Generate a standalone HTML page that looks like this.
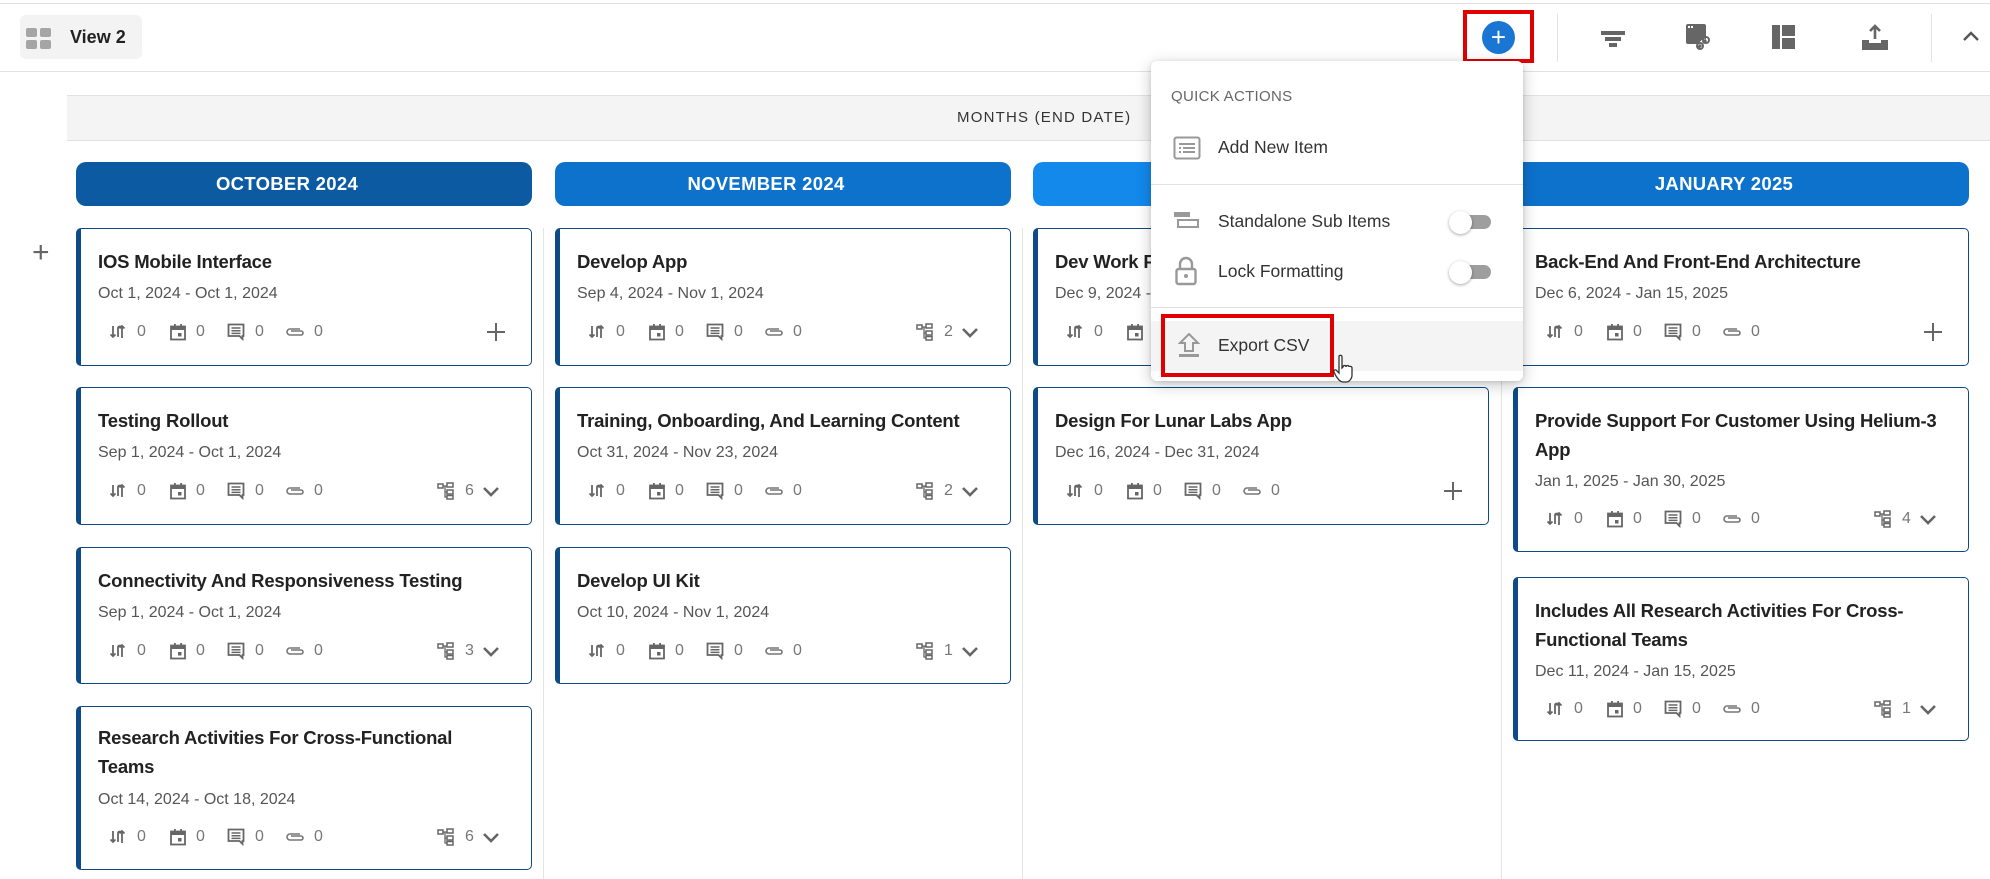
<!DOCTYPE html>
<html><head><meta charset="utf-8"><style>
*{margin:0;padding:0;box-sizing:border-box}
body{width:1990px;height:879px;overflow:hidden;background:#fff;font-family:"Liberation Sans",Arial,sans-serif;position:relative}
.abs{position:absolute}
.hdr{position:absolute;top:162px;height:44px;border-radius:10px;color:#fff;font-weight:bold;font-size:18.5px;text-align:center;line-height:44px;letter-spacing:.3px;padding-right:34px}
.card{position:absolute;background:#fff;border:1.5px solid #0d4a86;border-left:5px solid #0d4a86;border-radius:5px}
.t{position:absolute;left:17px;right:35px;font-weight:bold;font-size:18.5px;color:#222;line-height:29px;letter-spacing:-.2px}
.d{position:absolute;left:17px;font-size:16px;color:#555}
.m{position:absolute;left:0;right:0;height:20px}
.m svg{position:absolute;top:1px}
.m span{position:absolute;font-size:16px;color:#777;top:1px}
.sep{position:absolute;top:228px;bottom:0;width:1px;background:#e4e4e4}
.mi{position:absolute;left:1218px;font-size:17.5px;color:#333}
</style></head><body>
<div class="abs" style="left:0;top:3px;width:1990px;height:1px;background:#e2e2e2"></div>
<div class="abs" style="left:0;top:71px;width:1990px;height:1px;background:#e2e2e2"></div>
<div class="abs" style="left:20px;top:15px;width:122px;height:44px;background:#f3f3f3;border-radius:6px"></div>
<svg class="abs" style="left:26px;top:28px" width="26" height="22" viewBox="0 0 26 22"><rect x="0" y="0" width="11" height="9" rx="2" fill="#a5a5a5"/><rect x="14" y="0" width="11" height="9" rx="2" fill="#a5a5a5"/><rect x="0" y="12" width="11" height="9" rx="2" fill="#a5a5a5"/><rect x="14" y="12" width="11" height="9" rx="2" fill="#a5a5a5"/></svg>
<div class="abs" style="left:70px;top:27px;font-size:18px;font-weight:bold;color:#222">View 2</div>

<div class="abs" style="left:1463px;top:10px;width:71px;height:53px;border:4px solid #e00000"></div>
<div class="abs" style="left:1482px;top:21px;width:33px;height:33px;border-radius:50%;background:#1976d2;color:#fff;font-size:26px;line-height:32px;text-align:center">+</div>
<div class="abs" style="left:1557px;top:14px;width:1px;height:48px;background:#e2e2e2"></div>
<svg class="abs" style="left:1601px;top:29px" width="26" height="20" viewBox="0 0 26 20"><rect x="0" y="2" width="24" height="4" fill="#666"/><rect x="4" y="8" width="16" height="4" fill="#666"/><rect x="8" y="14" width="8" height="4" fill="#666"/></svg>
<svg class="abs" style="left:1686px;top:24px" width="26" height="28" viewBox="0 0 26 28"><rect x="0" y="0" width="20" height="20" rx="2" fill="#666"/><rect x="2" y="2" width="2" height="2" fill="#fff"/><rect x="5" y="2" width="2" height="2" fill="#fff"/><path d="M12 24l8-8" stroke="#fff" stroke-width="6"/><path d="M12 24l3-3M17 19l3-3" stroke="#666" stroke-width="3" fill="none"/><circle cx="14" cy="22" r="3" fill="none" stroke="#666" stroke-width="2"/><circle cx="20" cy="16" r="3" fill="none" stroke="#666" stroke-width="2"/></svg>
<svg class="abs" style="left:1772px;top:25px" width="24" height="24" viewBox="0 0 24 24"><rect x="0" y="0" width="8" height="24" fill="#666"/><rect x="10" y="0" width="13" height="11" fill="#666"/><rect x="10" y="13" width="13" height="11" fill="#666"/></svg>
<svg class="abs" style="left:1862px;top:24px" width="26" height="26" viewBox="0 0 26 26"><path d="M13 2v13M8 7l5-5 5 5" stroke="#666" stroke-width="2.6" fill="none"/><path d="M0 16h7v3h12v-3h7v10H0z" fill="#666"/></svg>
<div class="abs" style="left:1931px;top:14px;width:1px;height:48px;background:#e2e2e2"></div>
<svg class="abs" style="left:1963px;top:31px" width="16" height="10" viewBox="0 0 16 10"><path d="M1 9l7-7 7 7" stroke="#555" stroke-width="2.4" fill="none"/></svg>

<div class="abs" style="left:67px;top:95px;width:1923px;height:46px;background:#f4f4f4;border-top:1px solid #e2e2e2;border-bottom:1px solid #e2e2e2"></div>
<div class="abs" style="left:957px;top:109px;font-size:15px;color:#333;letter-spacing:1.2px">MONTHS (END DATE)</div>

<div class="hdr" style="left:76px;width:456px;background:#0b5aa2">OCTOBER 2024</div>
<div class="hdr" style="left:555px;width:456px;background:#0d72cc">NOVEMBER 2024</div>
<div class="hdr" style="left:1033px;width:456px;background:#1389ec">DECEMBER 2024</div>
<div class="hdr" style="left:1513px;width:456px;background:#0d72cc">JANUARY 2025</div>

<div class="sep" style="left:543px"></div>
<div class="sep" style="left:1022px"></div>
<div class="sep" style="left:1501px"></div>
<div class="abs" style="left:32px;top:236px;font-size:30px;color:#666;font-weight:300">+</div>

<svg width="0" height="0" style="position:absolute"><defs>
<symbol id="s" viewBox="0 0 18 18"><path d="M4 3v11M1.5 11.5 4 14l2.5-2.5M9 14V5c0-2 4-2 4 0v0M13 15V3M10.5 5.5 13 3l2.5 2.5" stroke="#666" stroke-width="1.8" fill="none"/></symbol>
<symbol id="c" viewBox="0 0 18 18"><rect x="2" y="3.5" width="14" height="13" fill="none" stroke="#666" stroke-width="1.8"/><rect x="2" y="3.5" width="14" height="3.5" fill="#666"/><rect x="5" y="1" width="1.8" height="3" fill="#666"/><rect x="11.2" y="1" width="1.8" height="3" fill="#666"/><rect x="9" y="10" width="3.5" height="3.5" fill="#666"/></symbol>
<symbol id="m" viewBox="0 0 18 18"><path d="M1.5 1.5h15v11.5h-1v3l-3-3H1.5z" fill="none" stroke="#666" stroke-width="1.8"/><path d="M4.5 5h9M4.5 7.7h9M4.5 10.4h9" stroke="#666" stroke-width="1.5"/></symbol>
<symbol id="p" viewBox="0 0 20 18"><path d="M15 6H5a3 3 0 0 0 0 6h11a2 2 0 0 0 0-4H6" fill="none" stroke="#777" stroke-width="1.6"/></symbol>
<symbol id="u" viewBox="0 0 18 18"><rect x="1" y="2" width="5" height="4" fill="none" stroke="#666" stroke-width="1.5"/><rect x="10" y="1" width="6" height="4" fill="none" stroke="#666" stroke-width="1.5"/><rect x="10" y="8" width="6" height="4" fill="none" stroke="#666" stroke-width="1.5"/><rect x="10" y="13.5" width="6" height="3.5" fill="none" stroke="#666" stroke-width="1.5"/><path d="M6 4h4M8 4v11h2M8 10h2" stroke="#666" stroke-width="1.3" fill="none"/></symbol>
<symbol id="v" viewBox="0 0 18 12"><path d="M2 2l7 7 7-7" stroke="#666" stroke-width="2.6" fill="none"/></symbol>
<symbol id="pl" viewBox="0 0 20 20"><path d="M10 1v18M1 10h18" stroke="#666" stroke-width="2"/></symbol>
</defs></svg>

<!-- col 1 -->
<div class="card" style="left:76px;top:228px;width:456px;height:138px">
<div class="t" style="top:18px">IOS Mobile Interface</div><div class="d" style="top:56px">Oct 1, 2024 - Oct 1, 2024</div>
<div class="m" style="top:93px"><svg style="left:28px" width="18" height="18"><use href="#s"/></svg><span style="left:56px">0</span><svg style="left:88px" width="18" height="18"><use href="#c"/></svg><span style="left:115px">0</span><svg style="left:146px" width="18" height="18"><use href="#m"/></svg><span style="left:174px">0</span><svg style="left:204px" width="20" height="18"><use href="#p"/></svg><span style="left:233px">0</span><svg style="left:405px;top:0" width="20" height="20"><use href="#pl"/></svg></div></div>

<div class="card" style="left:76px;top:387px;width:456px;height:138px">
<div class="t" style="top:18px">Testing Rollout</div><div class="d" style="top:56px">Sep 1, 2024 - Oct 1, 2024</div>
<div class="m" style="top:93px"><svg style="left:28px" width="18" height="18"><use href="#s"/></svg><span style="left:56px">0</span><svg style="left:88px" width="18" height="18"><use href="#c"/></svg><span style="left:115px">0</span><svg style="left:146px" width="18" height="18"><use href="#m"/></svg><span style="left:174px">0</span><svg style="left:204px" width="20" height="18"><use href="#p"/></svg><span style="left:233px">0</span><svg style="left:356px" width="18" height="18"><use href="#u"/></svg><span style="left:384px">6</span><svg style="left:401px;top:5px" width="18" height="12"><use href="#v"/></svg></div></div>

<div class="card" style="left:76px;top:547px;width:456px;height:137px">
<div class="t" style="top:18px">Connectivity And Responsiveness Testing</div><div class="d" style="top:56px">Sep 1, 2024 - Oct 1, 2024</div>
<div class="m" style="top:93px"><svg style="left:28px" width="18" height="18"><use href="#s"/></svg><span style="left:56px">0</span><svg style="left:88px" width="18" height="18"><use href="#c"/></svg><span style="left:115px">0</span><svg style="left:146px" width="18" height="18"><use href="#m"/></svg><span style="left:174px">0</span><svg style="left:204px" width="20" height="18"><use href="#p"/></svg><span style="left:233px">0</span><svg style="left:356px" width="18" height="18"><use href="#u"/></svg><span style="left:384px">3</span><svg style="left:401px;top:5px" width="18" height="12"><use href="#v"/></svg></div></div>

<div class="card" style="left:76px;top:706px;width:456px;height:164px">
<div class="t" style="top:16px">Research Activities For Cross-Functional Teams</div><div class="d" style="top:84px">Oct 14, 2024 - Oct 18, 2024</div>
<div class="m" style="top:120px"><svg style="left:28px" width="18" height="18"><use href="#s"/></svg><span style="left:56px">0</span><svg style="left:88px" width="18" height="18"><use href="#c"/></svg><span style="left:115px">0</span><svg style="left:146px" width="18" height="18"><use href="#m"/></svg><span style="left:174px">0</span><svg style="left:204px" width="20" height="18"><use href="#p"/></svg><span style="left:233px">0</span><svg style="left:356px" width="18" height="18"><use href="#u"/></svg><span style="left:384px">6</span><svg style="left:401px;top:5px" width="18" height="12"><use href="#v"/></svg></div></div>

<!-- col 2 -->
<div class="card" style="left:555px;top:228px;width:456px;height:138px">
<div class="t" style="top:18px">Develop App</div><div class="d" style="top:56px">Sep 4, 2024 - Nov 1, 2024</div>
<div class="m" style="top:93px"><svg style="left:28px" width="18" height="18"><use href="#s"/></svg><span style="left:56px">0</span><svg style="left:88px" width="18" height="18"><use href="#c"/></svg><span style="left:115px">0</span><svg style="left:146px" width="18" height="18"><use href="#m"/></svg><span style="left:174px">0</span><svg style="left:204px" width="20" height="18"><use href="#p"/></svg><span style="left:233px">0</span><svg style="left:356px" width="18" height="18"><use href="#u"/></svg><span style="left:384px">2</span><svg style="left:401px;top:5px" width="18" height="12"><use href="#v"/></svg></div></div>

<div class="card" style="left:555px;top:387px;width:456px;height:138px">
<div class="t" style="top:18px;right:10px">Training, Onboarding, And Learning Content</div><div class="d" style="top:56px">Oct 31, 2024 - Nov 23, 2024</div>
<div class="m" style="top:93px"><svg style="left:28px" width="18" height="18"><use href="#s"/></svg><span style="left:56px">0</span><svg style="left:88px" width="18" height="18"><use href="#c"/></svg><span style="left:115px">0</span><svg style="left:146px" width="18" height="18"><use href="#m"/></svg><span style="left:174px">0</span><svg style="left:204px" width="20" height="18"><use href="#p"/></svg><span style="left:233px">0</span><svg style="left:356px" width="18" height="18"><use href="#u"/></svg><span style="left:384px">2</span><svg style="left:401px;top:5px" width="18" height="12"><use href="#v"/></svg></div></div>

<div class="card" style="left:555px;top:547px;width:456px;height:137px">
<div class="t" style="top:18px">Develop UI Kit</div><div class="d" style="top:56px">Oct 10, 2024 - Nov 1, 2024</div>
<div class="m" style="top:93px"><svg style="left:28px" width="18" height="18"><use href="#s"/></svg><span style="left:56px">0</span><svg style="left:88px" width="18" height="18"><use href="#c"/></svg><span style="left:115px">0</span><svg style="left:146px" width="18" height="18"><use href="#m"/></svg><span style="left:174px">0</span><svg style="left:204px" width="20" height="18"><use href="#p"/></svg><span style="left:233px">0</span><svg style="left:356px" width="18" height="18"><use href="#u"/></svg><span style="left:384px">1</span><svg style="left:401px;top:5px" width="18" height="12"><use href="#v"/></svg></div></div>

<!-- col 3 -->
<div class="card" style="left:1033px;top:228px;width:456px;height:138px">
<div class="t" style="top:18px">Dev Work For App</div><div class="d" style="top:56px">Dec 9, 2024 - Dec 20, 2024</div>
<div class="m" style="top:93px"><svg style="left:28px" width="18" height="18"><use href="#s"/></svg><span style="left:56px">0</span><svg style="left:88px" width="18" height="18"><use href="#c"/></svg><span style="left:115px">0</span></div></div>

<div class="card" style="left:1033px;top:387px;width:456px;height:138px">
<div class="t" style="top:18px">Design For Lunar Labs App</div><div class="d" style="top:56px">Dec 16, 2024 - Dec 31, 2024</div>
<div class="m" style="top:93px"><svg style="left:28px" width="18" height="18"><use href="#s"/></svg><span style="left:56px">0</span><svg style="left:88px" width="18" height="18"><use href="#c"/></svg><span style="left:115px">0</span><svg style="left:146px" width="18" height="18"><use href="#m"/></svg><span style="left:174px">0</span><svg style="left:204px" width="20" height="18"><use href="#p"/></svg><span style="left:233px">0</span><svg style="left:405px;top:0" width="20" height="20"><use href="#pl"/></svg></div></div>

<!-- col 4 -->
<div class="card" style="left:1513px;top:228px;width:456px;height:138px">
<div class="t" style="top:18px">Back-End And Front-End Architecture</div><div class="d" style="top:56px">Dec 6, 2024 - Jan 15, 2025</div>
<div class="m" style="top:93px"><svg style="left:28px" width="18" height="18"><use href="#s"/></svg><span style="left:56px">0</span><svg style="left:88px" width="18" height="18"><use href="#c"/></svg><span style="left:115px">0</span><svg style="left:146px" width="18" height="18"><use href="#m"/></svg><span style="left:174px">0</span><svg style="left:204px" width="20" height="18"><use href="#p"/></svg><span style="left:233px">0</span><svg style="left:405px;top:0" width="20" height="20"><use href="#pl"/></svg></div></div>

<div class="card" style="left:1513px;top:387px;width:456px;height:165px">
<div class="t" style="top:18px;right:10px">Provide Support For Customer Using Helium&#8209;3 App</div><div class="d" style="top:85px">Jan 1, 2025 - Jan 30, 2025</div>
<div class="m" style="top:121px"><svg style="left:28px" width="18" height="18"><use href="#s"/></svg><span style="left:56px">0</span><svg style="left:88px" width="18" height="18"><use href="#c"/></svg><span style="left:115px">0</span><svg style="left:146px" width="18" height="18"><use href="#m"/></svg><span style="left:174px">0</span><svg style="left:204px" width="20" height="18"><use href="#p"/></svg><span style="left:233px">0</span><svg style="left:356px" width="18" height="18"><use href="#u"/></svg><span style="left:384px">4</span><svg style="left:401px;top:5px" width="18" height="12"><use href="#v"/></svg></div></div>

<div class="card" style="left:1513px;top:577px;width:456px;height:164px">
<div class="t" style="top:18px">Includes All Research Activities For Cross-Functional Teams</div><div class="d" style="top:85px">Dec 11, 2024 - Jan 15, 2025</div>
<div class="m" style="top:121px"><svg style="left:28px" width="18" height="18"><use href="#s"/></svg><span style="left:56px">0</span><svg style="left:88px" width="18" height="18"><use href="#c"/></svg><span style="left:115px">0</span><svg style="left:146px" width="18" height="18"><use href="#m"/></svg><span style="left:174px">0</span><svg style="left:204px" width="20" height="18"><use href="#p"/></svg><span style="left:233px">0</span><svg style="left:356px" width="18" height="18"><use href="#u"/></svg><span style="left:384px">1</span><svg style="left:401px;top:5px" width="18" height="12"><use href="#v"/></svg></div></div>

<!-- popup -->
<div class="abs" style="left:1151px;top:61px;width:372px;height:320px;background:#fff;border-radius:6px;box-shadow:0 4px 16px rgba(0,0,0,.22),0 1px 4px rgba(0,0,0,.12)"></div>
<div class="abs" style="left:1171px;top:88px;font-size:15px;color:#666;letter-spacing:.3px">QUICK ACTIONS</div>
<svg class="abs" style="left:1173px;top:136px" width="28" height="24" viewBox="0 0 28 24"><rect x="1.5" y="1.5" width="25" height="21" rx="2" fill="none" stroke="#999" stroke-width="2"/><path d="M6 8h16M6 12h2M10 12h12M6 16h2M10 16h12" stroke="#999" stroke-width="2"/></svg>
<div class="mi" style="top:137px">Add New Item</div>
<div class="abs" style="left:1151px;top:184px;width:372px;height:1px;background:#e2e2e2"></div>
<svg class="abs" style="left:1174px;top:212px" width="26" height="18" viewBox="0 0 26 18"><rect x="0" y="0" width="16" height="5" fill="#999"/><rect x="4" y="8" width="20" height="7" fill="none" stroke="#999" stroke-width="2"/></svg>
<div class="mi" style="top:211px">Standalone Sub Items</div>
<div class="abs" style="left:1451px;top:215px;width:40px;height:14px;border-radius:7px;background:#9e9e9e"></div>
<div class="abs" style="left:1449px;top:211px;width:23px;height:23px;border-radius:50%;background:#fff;box-shadow:0 1px 3px rgba(0,0,0,.35)"></div>
<svg class="abs" style="left:1175px;top:256px" width="22" height="30" viewBox="0 0 22 30"><path d="M5 13V8a6 6 0 0 1 12 0v5" fill="none" stroke="#999" stroke-width="2.4"/><rect x="1.5" y="13" width="19" height="15" rx="2" fill="none" stroke="#999" stroke-width="2.4"/><circle cx="11" cy="20" r="2" fill="#999"/></svg>
<div class="mi" style="top:261px">Lock Formatting</div>
<div class="abs" style="left:1451px;top:265px;width:40px;height:14px;border-radius:7px;background:#9e9e9e"></div>
<div class="abs" style="left:1449px;top:261px;width:23px;height:23px;border-radius:50%;background:#fff;box-shadow:0 1px 3px rgba(0,0,0,.35)"></div>
<div class="abs" style="left:1151px;top:307px;width:372px;height:1px;background:#e2e2e2"></div>
<div class="abs" style="left:1151px;top:321px;width:372px;height:50px;background:#f4f4f4"></div>
<svg class="abs" style="left:1178px;top:333px" width="22" height="25" viewBox="0 0 22 25"><path d="M11 1 2 10h5v8h8v-8h5z" fill="none" stroke="#999" stroke-width="2"/><rect x="1" y="21" width="20" height="3" fill="#999"/></svg>
<div class="mi" style="top:335px">Export CSV</div>
<div class="abs" style="left:1161px;top:314px;width:173px;height:63px;border:4px solid #e00000"></div>
<svg class="abs" style="left:1333px;top:354px" width="22" height="30" viewBox="0 0 22 30"><path d="M6 2c1-1 3-1 3 1v11l1-1c0-2 3-2 3 0 0-2 3-2 3 0 0-1 3-1 3 1v7c0 4-3 7-6 7h-3c-3 0-5-3-7-6l-2-4c-1-2 2-3 3-1l2 2V3z" fill="#fff" stroke="#333" stroke-width="1.3"/></svg>
</body></html>
